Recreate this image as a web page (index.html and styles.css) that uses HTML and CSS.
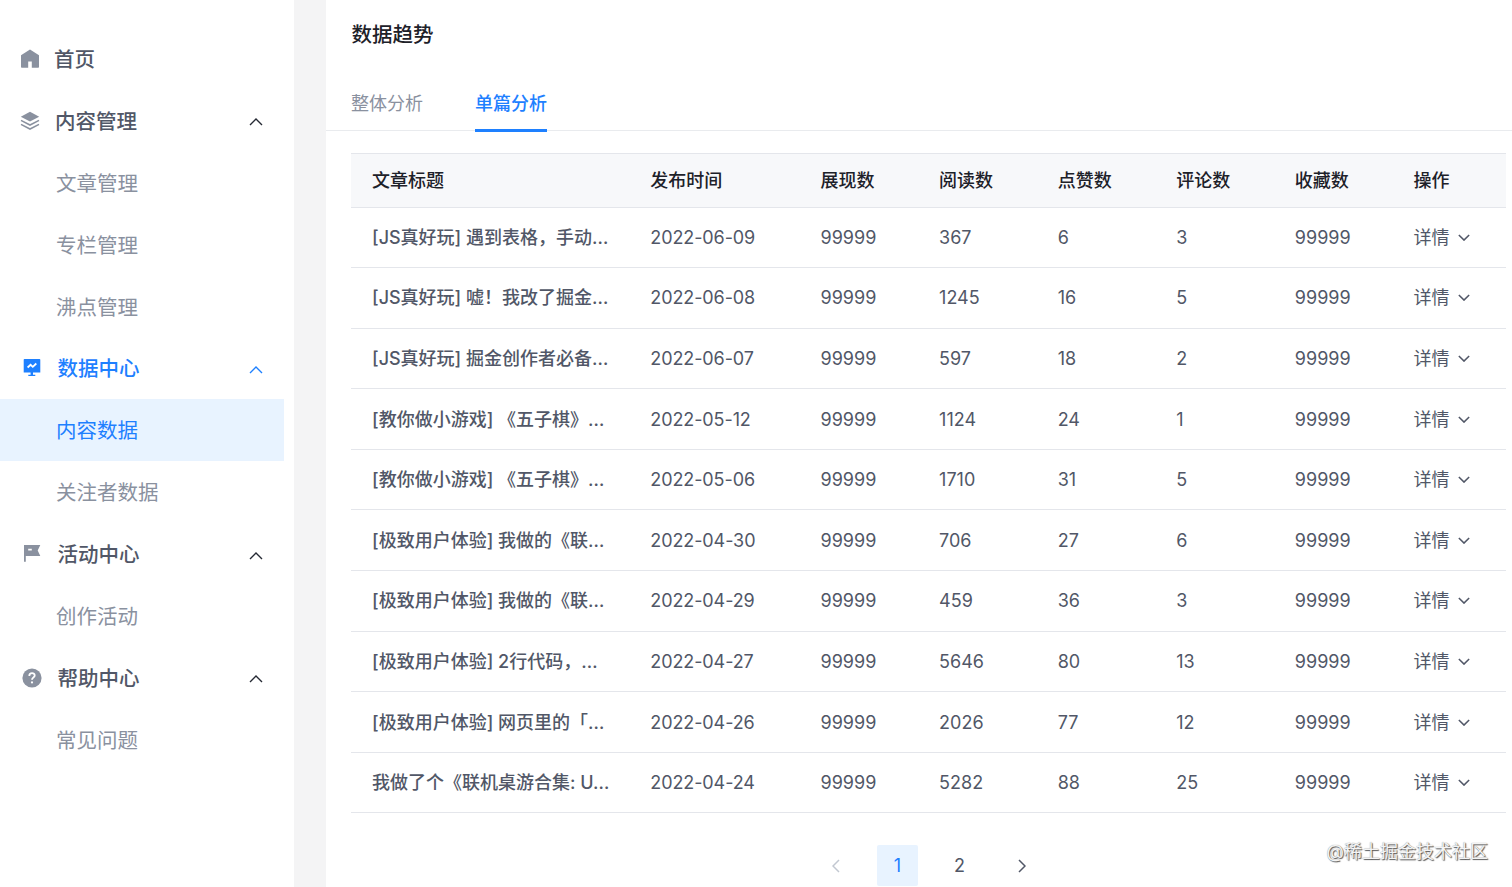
FILE: index.html
```html
<!doctype html>
<html lang="zh-CN">
<head>
  <meta charset="utf-8">
  <title>数据趋势</title>
  <link rel="stylesheet" href="styles.css">
</head>
<body>
  <svg class="defs">
    <symbol id="up" viewBox="0 0 14 8"><path d="M1 7l6-6 6 6"/></symbol>
    <symbol id="down" viewBox="0 0 14 8"><path d="M1 1l6 6 6-6"/></symbol>
  </svg>

  <aside class="sidebar">
    <ul class="menu">
      <li class="group home">
        <svg class="icon" viewBox="0 0 20 20"><path d="M10 .6L1 6.200V18a.8.8 0 0 0 .8.800h6.400v-6.300h3.600v6.300h6.400a.8.8 0 0 0 .8-.8V6.200z"/></svg>
        首页
      </li>
      <li class="group first">
        <svg class="icon" viewBox="0 0 20 20"><path d="M10 .8l9.200 4.900L10 10.600.8 5.700z"/><path class="line" d="M1 9.400l9 4.600 9-4.600M1 13.400l9 4.600 9-4.600"/></svg>
        内容管理
        <svg class="arrow"><use href="#up"/></svg>
      </li>
      <li class="item">文章管理</li>
      <li class="item">专栏管理</li>
      <li class="item">沸点管理</li>
      <li class="group current">
        <svg class="icon" viewBox="0 0 20 20"><path d="M2.500 1h15a.8.8 0 0 1 .8.800v12.700h-7.300v2.200h2.300v1.300h-7v-1.300h2.300v-2.200H1.700V1.800a.8.8 0 0 1 .8-.8z"/><path class="cut" d="M5.600 9.500l3-2.700 2.200 2 3.500-3.300"/></svg>
        数据中心
        <svg class="arrow"><use href="#up"/></svg>
      </li>
      <li class="item active">内容数据</li>
      <li class="item">关注者数据</li>
      <li class="group">
        <svg class="icon" viewBox="0 0 20 20"><path fill-rule="evenodd" d="M2 1h16.300l-2.600 5.500 2.600 5.500H3.800v5.700H2zM6.200 4.800v1.600h3.600V4.800z"/></svg>
        活动中心
        <svg class="arrow"><use href="#up"/></svg>
      </li>
      <li class="item">创作活动</li>
      <li class="group">
        <svg class="icon" viewBox="0 0 20 20"><circle cx="10" cy="10" r="9.600"/><path class="cut" d="M7.300 8c0-3.800 5.600-3.500 5.400-.4-.1 1.700-2.700 2-2.700 4.200"/><circle class="dot" cx="10" cy="14.400" r="1.100"/></svg>
        帮助中心
        <svg class="arrow"><use href="#up"/></svg>
      </li>
      <li class="item">常见问题</li>
    </ul>
  </aside>

  <main class="content">
    <h1>数据趋势</h1>
    <nav class="tabs">
      <a class="tab">整体分析</a>
      <a class="tab selected">单篇分析</a>
    </nav>

    <table>
      <thead>
        <tr><th>文章标题</th><th>发布时间</th><th>展现数</th><th>阅读数</th><th>点赞数</th><th>评论数</th><th>收藏数</th><th>操作</th></tr>
      </thead>
      <tbody>
        <tr><td>[JS真好玩] 遇到表格，手动…</td><td>2022-06-09</td><td>99999</td><td>367</td><td>6</td><td>3</td><td>99999</td><td>详情<svg class="more"><use href="#down"/></svg></td></tr>
        <tr><td>[JS真好玩] 嘘！我改了掘金…</td><td>2022-06-08</td><td>99999</td><td>1245</td><td>16</td><td>5</td><td>99999</td><td>详情<svg class="more"><use href="#down"/></svg></td></tr>
        <tr><td>[JS真好玩] 掘金创作者必备…</td><td>2022-06-07</td><td>99999</td><td>597</td><td>18</td><td>2</td><td>99999</td><td>详情<svg class="more"><use href="#down"/></svg></td></tr>
        <tr><td>[教你做小游戏] 《五子棋》…</td><td>2022-05-12</td><td>99999</td><td>1124</td><td>24</td><td>1</td><td>99999</td><td>详情<svg class="more"><use href="#down"/></svg></td></tr>
        <tr><td>[教你做小游戏] 《五子棋》…</td><td>2022-05-06</td><td>99999</td><td>1710</td><td>31</td><td>5</td><td>99999</td><td>详情<svg class="more"><use href="#down"/></svg></td></tr>
        <tr><td>[极致用户体验] 我做的《联…</td><td>2022-04-30</td><td>99999</td><td>706</td><td>27</td><td>6</td><td>99999</td><td>详情<svg class="more"><use href="#down"/></svg></td></tr>
        <tr><td>[极致用户体验] 我做的《联…</td><td>2022-04-29</td><td>99999</td><td>459</td><td>36</td><td>3</td><td>99999</td><td>详情<svg class="more"><use href="#down"/></svg></td></tr>
        <tr><td>[极致用户体验] 2行代码，…</td><td>2022-04-27</td><td>99999</td><td>5646</td><td>80</td><td>13</td><td>99999</td><td>详情<svg class="more"><use href="#down"/></svg></td></tr>
        <tr><td>[极致用户体验] 网页里的「…</td><td>2022-04-26</td><td>99999</td><td>2026</td><td>77</td><td>12</td><td>99999</td><td>详情<svg class="more"><use href="#down"/></svg></td></tr>
        <tr><td>我做了个《联机桌游合集: U…</td><td>2022-04-24</td><td>99999</td><td>5282</td><td>88</td><td>25</td><td>99999</td><td>详情<svg class="more"><use href="#down"/></svg></td></tr>
      </tbody>
    </table>

    <div class="pager">
      <span class="page disabled"><svg viewBox="0 0 8 14"><path d="M7 1L1 7l6 6"/></svg></span>
      <span class="page on">1</span>
      <span class="page">2</span>
      <span class="page"><svg viewBox="0 0 8 14"><path d="M1 1l6 6-6 6"/></svg></span>
    </div>
  </main>

  <div class="watermark">@稀土掘金技术社区</div>
</body>
</html>
```
FILE: styles.css
```css
* { box-sizing: border-box; }

body {
  display: flex;
  gap: 32px;
  margin: 0;
  height: 887px;
  overflow: hidden;
  background: #f4f4f5;
  color: #515767;
  font-family: Inter, "Noto Sans CJK SC", sans-serif;
  font-size: 18px;
}

svg { fill: none; stroke: currentColor; }
.defs { position: absolute; width: 0; height: 0; }

/* sidebar */
.sidebar {
  flex: none;
  width: 294px;
  padding: 27.5px 10px 0 0;
  background: #fff;
}
.menu {
  margin: 0;
  padding: 0;
  list-style: none;
  font-size: 20.5px;
}
.menu li {
  display: flex;
  align-items: center;
  height: 61.9px;
  padding-bottom: 1px;
}
.group {
  padding: 0 21px 0 21.500px;
  gap: 16px;
  font-weight: 500;
}
.group.home, .group.first {
  padding-left: 20px;
  gap: 14px;
}
.group.first { gap: 15px; }
.item {
  padding-left: 56px;
  color: #8a919f;
}
.current, .item.active { color: #1e80ff; }
.active { background: #e8f3ff; }
.icon {
  width: 20px;
  height: 20px;
  margin-top: 2px;
  fill: #8a919f;
  stroke: none;
}
.current .icon { fill: #1e80ff; }
.icon .line { fill: none; stroke: #8a919f; stroke-width: 1.6; }
.icon .cut { fill: none; stroke: #fff; stroke-width: 1.8; }
.icon .dot { fill: #fff; }
.arrow {
  width: 14px;
  height: 8px;
  margin: 5px 0 0 auto;
  color: #252933;
  stroke-width: 1.4;
}
.current .arrow { color: #1e80ff; }

/* content */
.content {
  flex: 1;
  background: #fff;
}
h1 {
  margin: 0;
  padding: 20px 0 0 25.5px;
  color: #1d2129;
  font-size: 20.5px;
  font-weight: 500;
  line-height: 30px;
}
.tabs {
  display: flex;
  gap: 52px;
  height: 81px;
  padding: 26px 25px 0;
  border-bottom: 1px solid #e9ebee;
}
.tab {
  height: 56px;
  color: #8a919f;
  line-height: 56px;
}
.selected {
  border-bottom: 3px solid #1e80ff;
  color: #1e80ff;
  font-weight: 500;
}

table {
  display: block;
  width: 1155px;
  margin: 22px 0 0 25px;
}
thead, tbody { display: block; }
tr {
  display: grid;
  grid-template-columns: 278.300px 170.200px repeat(5, 118.600px) 1fr;
  align-items: center;
  height: 60.6px;
  border-bottom: 1px solid #e4e6eb;
}
thead tr {
  height: 54.5px;
  border-top: 1px solid #e4e6eb;
  background: #f7f8fa;
}
th, td {
  padding: 1px 0 0 21px;
  line-height: 24px;
  text-align: left;
  white-space: nowrap;
}
th {
  color: #1d2129;
  font-weight: 500;
}
td:first-child { font-weight: 500; }
td:nth-child(2) { letter-spacing: -.1px; }
.more {
  width: 12px;
  height: 7px;
  margin-left: 9px;
  vertical-align: 3px;
  stroke-width: 1.8;
}

.pager {
  display: flex;
  gap: 21px;
  margin: 32px 0 0 489px;
}
.page {
  display: flex;
  align-items: center;
  justify-content: center;
  width: 41px;
  height: 41px;
  border-radius: 2px;
}
.page svg {
  width: 8px;
  height: 14px;
  stroke-width: 1.5;
}
.disabled { color: #c2c8d1; }
.on {
  background: #e8f3ff;
  color: #1e80ff;
}

.watermark {
  position: absolute;
  right: 24px;
  bottom: 24px;
  color: #f4f4f4;
  text-shadow: 1px 1px 1px #555, 0 0 1px #888;
}
```
